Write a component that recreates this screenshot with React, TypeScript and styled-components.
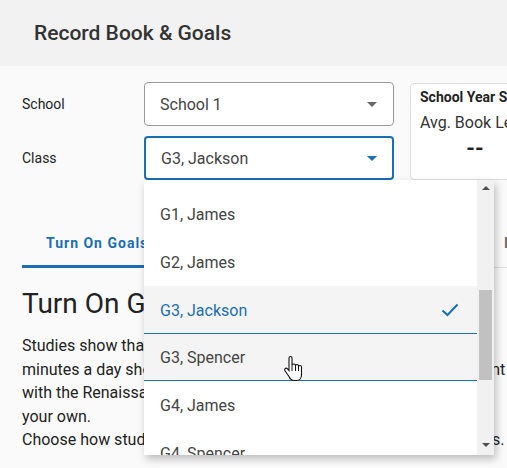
import styled, { createGlobalStyle } from "styled-components";

const Global = createGlobalStyle`
  html, body {
    margin: 0;
    background: #fafafa;
    font-family: Roboto, "Liberation Sans", sans-serif;
    overflow: hidden;
  }
  * { box-sizing: border-box; }
`;

const Page = styled.div`
  min-width: 760px;
  height: 468px;
  overflow: hidden;
`;

const Header = styled.header`
  height: 66px;
  background: #f2f2f2;
  display: flex;
  align-items: center;
  padding-left: 34px;
`;

const Title = styled.h1`
  margin: 0;
  font-size: 21px;
  font-weight: 500;
  color: #333;
`;

const Main = styled.main`
  padding: 16px 0 0 22px;
`;

const Controls = styled.div`
  display: flex;
  gap: 16px;
  align-items: flex-start;
`;

const Form = styled.div`
  display: grid;
  grid-template-columns: 122px 250px;
  row-gap: 10px;
  align-items: center;
`;

const Label = styled.label`
  font-size: 14px;
  color: #222;
`;

const SelectWrap = styled.div`
  position: relative;
`;

const Select = styled.div<{ $focused?: boolean }>`
  height: 44px;
  display: flex;
  align-items: center;
  justify-content: space-between;
  padding: 0 15px;
  background: #fff;
  border: ${(p) => (p.$focused ? "2px solid #1a6eb5" : "1px solid #9a9a9a")};
  border-radius: 4px;
  font-size: 16px;
  color: #444;
`;

const Caret = styled.span<{ $focused?: boolean }>`
  width: 0;
  height: 0;
  margin-right: ${(p) => (p.$focused ? "0" : "1px")};
  border-left: 5px solid transparent;
  border-right: 5px solid transparent;
  border-top: 5px solid ${(p) => (p.$focused ? "#1a6eb5" : "#666")};
`;

const Menu = styled.div`
  position: absolute;
  top: 100%;
  left: 0;
  width: 350px;
  height: 275px;
  background: #fff;
  display: flex;
  box-shadow: 2px 4px 8px rgba(0, 0, 0, 0.25);
  z-index: 5;
  overflow: hidden;
`;

const List = styled.ul`
  flex: 1;
  margin: 0;
  padding: 10px 0 0;
  list-style: none;
`;

const Item = styled.li<{ $selected?: boolean; $hover?: boolean }>`
  height: 48px;
  display: flex;
  align-items: center;
  justify-content: space-between;
  padding: 0 18px 0 16px;
  font-size: 16px;
  color: ${(p) => (p.$selected ? "#1a6eb5" : "#444")};
  background: ${(p) => (p.$selected || p.$hover ? "#f4f4f4" : "#fff")};
  border-top: 1px solid ${(p) => (p.$hover ? "#1a6eb5" : "transparent")};
  border-bottom: 1px solid ${(p) => (p.$hover ? "#1a6eb5" : "transparent")};
  margin-top: ${(p) => (p.$hover ? "-1px" : "0")};
`;

const ScrollTrack = styled.div`
  width: 17px;
  background: #f1f1f1;
  display: flex;
  flex-direction: column;
  align-items: center;
  padding-top: 6px;
`;

const ArrowUp = styled.span`
  width: 0;
  height: 0;
  border-left: 4px solid transparent;
  border-right: 4px solid transparent;
  border-bottom: 4px solid #505050;
`;

const ArrowDown = styled.span`
  width: 0;
  height: 0;
  margin-top: auto;
  margin-bottom: 8px;
  border-left: 4px solid transparent;
  border-right: 4px solid transparent;
  border-top: 4px solid #505050;
`;

const Thumb = styled.div`
  width: 13px;
  height: 90px;
  margin-top: 100px;
  background: #c1c1c1;
`;

const Card = styled.section`
  width: 300px;
  height: 97px;
  margin-top: 1px;
  background: #fff;
  border: 1px solid #ddd;
  border-radius: 4px;
  padding: 5px 9px;
`;

const CardTitle = styled.div`
  font-size: 14px;
  font-weight: 700;
  line-height: 16px;
  color: #222;
  white-space: nowrap;
`;

const Stat = styled.div`
  width: 110px;
  margin-top: 6px;
  text-align: center;
`;

const StatLabel = styled.div`
  font-size: 16px;
  line-height: 24px;
  color: #333;
  white-space: nowrap;
  text-align: left;
`;

const StatValue = styled.div`
  font-size: 22px;
  font-weight: 700;
  line-height: 28px;
  color: #222;
`;

const Tabs = styled.div`
  display: flex;
  margin-top: 40px;
  border-bottom: 1px solid #ddd;
`;

const Tab = styled.div<{ $active?: boolean }>`
  flex: 0 0 458px;
  height: 48px;
  display: flex;
  align-items: center;
  padding-left: 24px;
  font-size: 14px;
  font-weight: 700;
  letter-spacing: 1px;
  color: ${(p) => (p.$active ? "#1a6eb5" : "#666")};
  border-bottom: 3px solid ${(p) => (p.$active ? "#1a6eb5" : "transparent")};
  margin-bottom: -1px;
`;

const Heading = styled.h2`
  margin: 19px 0 0;
  font-size: 28px;
  font-weight: 400;
  line-height: 34px;
  color: #222;
`;

const Text = styled.p`
  margin: 0;
  width: 485px;
  font-size: 16px;
  line-height: 23.5px;
  color: #222;
`;

const Body = styled.div`
  margin-top: 13px;
`;

const Cursor = styled.svg`
  position: absolute;
  left: 139px;
  top: 219px;
  z-index: 6;
`;

const classes = [
  { name: "G1, James" },
  { name: "G2, James" },
  { name: "G3, Jackson", selected: true },
  { name: "G3, Spencer", hover: true },
  { name: "G4, James" },
  { name: "G4, Spencer" },
];

export default function App() {
  return (
    <Page>
      <Global />
      <Header>
        <Title>Record Book &amp; Goals</Title>
      </Header>
      <Main>
        <Controls>
          <Form>
            <Label>School</Label>
            <Select>
              School 1
              <Caret />
            </Select>
            <Label>Class</Label>
            <SelectWrap>
              <Select $focused>
                G3, Jackson
                <Caret $focused />
              </Select>
              <Menu>
                <List>
                  {classes.map((c) => (
                    <Item key={c.name} $selected={c.selected} $hover={c.hover}>
                      {c.name}
                      {c.selected && (
                        <svg width="18" height="14" viewBox="0 0 18 14">
                          <path d="M1.5 7.5 L6.5 12 L16.5 1.5" fill="none" stroke="#1a6eb5" strokeWidth="2" />
                        </svg>
                      )}
                    </Item>
                  ))}
                </List>
                <ScrollTrack>
                  <ArrowUp />
                  <Thumb />
                  <ArrowDown />
                </ScrollTrack>
              </Menu>
              <Cursor width="20" height="27" viewBox="0 0 20 27">
                <path
                  d="M7.5 1.5 C6.7 1.5 6 2.2 6 3 V15.5 L4.3 13.7 C3.7 13.1 2.7 13.1 2.1 13.7 C1.5 14.3 1.5 15.2 2 15.8 L6 21.5 C7 24 9 25.5 11.5 25.5 H13.5 C16.5 25.5 18.5 23 18.5 20 V12 C18.5 11.2 17.8 10.5 17 10.5 C16.2 10.5 15.5 11.2 15.5 12 V11 C15.5 10.2 14.8 9.5 14 9.5 C13.2 9.5 12.5 10.2 12.5 11 V10.5 C12.5 9.7 11.8 9 11 9 C10.2 9 9 9.7 9 10.5 V3 C9 2.2 8.3 1.5 7.5 1.5 Z"
                  fill="#fff"
                  stroke="#111"
                  strokeWidth="1.1"
                />
                <path d="M9 10.5 V16 M12.5 11 V16 M15.5 12 V16" stroke="#111" strokeWidth="1" fill="none" />
              </Cursor>
            </SelectWrap>
          </Form>
          <Card>
            <CardTitle>School Year Summary</CardTitle>
            <Stat>
              <StatLabel>Avg. Book Level</StatLabel>
              <StatValue>--</StatValue>
            </Stat>
          </Card>
        </Controls>
        <Tabs>
          <Tab $active>Turn On Goals</Tab>
          <Tab>Individual Goals</Tab>
        </Tabs>
        <Heading>Turn On Goals</Heading>
        <Body>
          <Text>
            Studies show that students who practice reading for at least 30
            minutes a day show the greatest reading gains. Set goals consistent
            with the Renaissance recommendations, or create other goals of
            your own.
          </Text>
          <Text>
            Choose how students will be assigned goals, then set all their goals.
          </Text>
        </Body>
      </Main>
    </Page>
  );
}
